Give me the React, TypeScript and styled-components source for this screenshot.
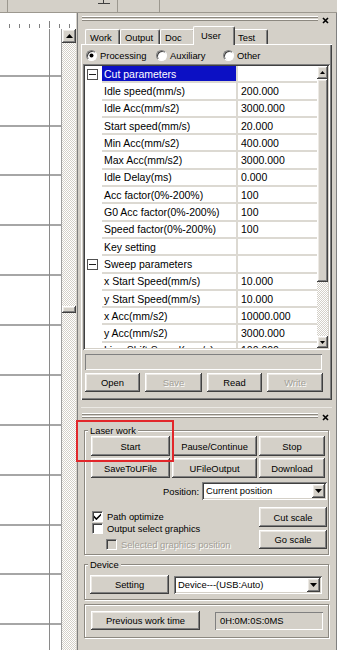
import * as React from "react";
import styled, { createGlobalStyle, css } from "styled-components";

const FACE = "#d4d0c8";
const LINE = "#dcd9d2";

const GlobalStyle = createGlobalStyle`
  * { box-sizing: border-box; }
  html, body { margin: 0; padding: 0; background: ${FACE}; }
  body {
    font-family: "Liberation Sans", Arial, sans-serif;
    font-size: 9.4px;
    color: #000;
  }
`;

const raised = css`
  background: ${FACE};
  box-shadow: inset -1px -1px #404040, inset 1px 1px #ffffff,
    inset -2px -2px #808080, inset 2px 2px #ece9e4;
`;

const sunken = css`
  box-shadow: inset 1px 1px #808080, inset -1px -1px #ffffff,
    inset 2px 2px #404040, inset -2px -2px ${FACE};
`;

const Frame = styled.div`
  position: relative;
  width: 337px;
  height: 650px;
  overflow: hidden;
  display: flex;
  flex-direction: column;
  background: ${FACE};
`;

const TopBar = styled.div`
  height: 13px;
  flex: none;
  display: flex;
  border-bottom: 1px solid #9c988f;
`;

const ToolCell = styled.div<{ $w: number }>`
  width: ${p => p.$w}px;
  display: flex;
  justify-content: flex-end;
  padding-right: 6px;
  border-right: 1px solid #9c988f;
`;

const Body = styled.div`
  flex: 1;
  display: flex;
  min-height: 0;
`;

const LeftPane = styled.div`
  width: 78px;
  flex: none;
  display: flex;
  flex-direction: column;
  border-right: 1px solid #808080;
`;

const RulerRow = styled.div`
  height: 16px;
  flex: none;
  display: flex;
`;

const RulerStrip = styled.div`
  width: 76px;
  background: #fff;
`;

const CanvasRow = styled.div`
  flex: 1;
  display: flex;
  min-height: 0;
`;

const Canvas = styled.div`
  width: 62px;
  flex: none;
  display: flex;
  overflow: hidden;
  background: #ffffff;
  border-right: 1px solid #9c9c9c;
`;

const CanvasCol = styled.div<{ $w: number }>`
  width: ${p => p.$w}px;
  flex: none;
  display: flex;
  flex-direction: column;
`;

const VGuide = styled.div`
  width: 1px;
  flex: none;
  background: #8a8a8a;
`;

const GuideCell = styled.div<{ $h: number }>`
  height: ${p => p.$h}px;
  flex: none;
  border-bottom: 2px solid #a6a6a6;
`;

const VScroll = styled.div<{ $w: number }>`
  width: ${p => p.$w}px;
  flex: none;
  display: flex;
  flex-direction: column;
`;

const ScrollBtn = styled.div<{ $h: number }>`
  height: ${p => p.$h}px;
  flex: none;
  display: flex;
  align-items: center;
  justify-content: center;
  ${raised};
`;

const ScrollTrack = styled.div`
  flex: 1;
  background: repeating-conic-gradient(${FACE} 0 25%, #ffffff 0 50%) 0 0 / 2px 2px;
`;

const ScrollThumb = styled.div<{ $top: number; $h: number }>`
  margin-top: ${p => p.$top}px;
  height: ${p => p.$h}px;
  ${raised};
`;

const RightPane = styled.div`
  flex: 1;
  display: flex;
  flex-direction: column;
  padding: 0 4px 0 3px;
  border-right: 1px solid #808080;
`;

const DockHeader = styled.div<{ $pad: number }>`
  height: 13px;
  flex: none;
  display: flex;
  align-items: flex-start;
  padding: ${p => p.$pad}px 0 0 1px;
`;

const Grip = styled.div`
  flex: 1;
  height: 5px;
  background: linear-gradient(
    to bottom,
    #ffffff 0 1px,
    #8c8880 1px 2px,
    transparent 2px 3px,
    #ffffff 3px 4px,
    #8c8880 4px 5px
  );
`;

const CloseBox = styled.div`
  width: 14px;
  display: flex;
  justify-content: center;
  padding-top: 1px;
`;

const TabStrip = styled.div`
  height: 18px;
  flex: none;
  display: flex;
  align-items: flex-end;
  padding-left: 4px;
`;

const Tab = styled.div<{ $w: number; $active?: boolean }>`
  position: relative;
  width: ${p => p.$w + (p.$active ? 4 : 0)}px;
  height: ${p => (p.$active ? 19 : 15)}px;
  margin: ${p => (p.$active ? "0 -2px -1px" : "0")};
  z-index: ${p => (p.$active ? 1 : 0)};
  padding: ${p => (p.$active ? "3px 0 0 7px" : "2px 0 0 4px")};
  background: ${FACE};
  border-top: 1px solid #ffffff;
  border-left: 1px solid #ffffff;
  border-right: 1px solid #404040;
  box-shadow: inset -1px 0 #808080;
  border-radius: 2px 2px 0 0;
  white-space: nowrap;
`;

const Sheet = styled.div`
  height: 356px;
  flex: none;
  display: flex;
  flex-direction: column;
  padding: 3px 2px 0 2px;
  box-shadow: inset 1px 1px #ffffff, inset -1px -1px #404040, inset -2px -2px #808080;
`;

const RadioRow = styled.div`
  height: 17px;
  display: flex;
  align-items: center;
  padding-left: 3px;
`;

const RadioItem = styled.label<{ $w: number }>`
  width: ${p => p.$w}px;
  display: flex;
  align-items: center;
  gap: 3px;
`;

const RadioDot = styled.span<{ $on?: boolean }>`
  width: 11px;
  height: 11px;
  border-radius: 50%;
  background: #fff;
  border: 1px solid;
  border-color: #808080 #ffffff #ffffff #808080;
  box-shadow: inset 1px 1px #404040;
  display: flex;
  align-items: center;
  justify-content: center;
  &::after {
    content: "";
    width: 3px;
    height: 3px;
    border-radius: 50%;
    background: ${p => (p.$on ? "#000" : "transparent")};
    box-shadow: ${p => (p.$on ? "0 0 0 0.5px #000" : "none")};
  }
`;

const PropGrid = styled.div`
  height: 286px;
  flex: none;
  display: flex;
  padding: 2px;
  background: #fff;
  ${sunken};
`;

const GridBody = styled.div`
  flex: 1;
  display: flex;
  flex-direction: column;
  overflow: hidden;
`;

const GridRow = styled.div`
  display: grid;
  grid-template-columns: 17px 136px 1fr;
  height: 17.3px;
  flex: none;
  font-size: 10.5px;
`;

const GutterCell = styled.div`
  display: flex;
  align-items: center;
  padding-left: 2px;
`;

const MinusBox = styled.span`
  width: 11px;
  height: 11px;
  border: 1px solid #505050;
  display: flex;
  align-items: center;
  justify-content: center;
  &::after {
    content: "";
    width: 7px;
    height: 1px;
    background: #202020;
  }
`;

const NameCell = styled.div<{ $sel?: boolean }>`
  border-bottom: 2px solid ${LINE};
  border-right: 2px solid ${LINE};
  padding-left: 2px;
  display: flex;
  align-items: center;
  white-space: nowrap;
  overflow: hidden;
  background: ${p => (p.$sel ? "#0c10c4" : "#fff")};
  color: ${p => (p.$sel ? "#fff" : "#000")};
`;

const ValueCell = styled.div`
  border-bottom: 2px solid ${LINE};
  padding-left: 3px;
  display: flex;
  align-items: center;
  white-space: nowrap;
  overflow: hidden;
`;

const StatusField = styled.div`
  height: 16px;
  flex: none;
  margin: 4px 8px 0 2px;
  background: ${FACE};
  box-shadow: inset 1px 1px #808080, inset -1px -1px #ffffff;
`;

const ButtonRow = styled.div`
  display: flex;
  gap: 5px;
  margin-top: 3px;
  padding-left: 2px;
`;

const Btn = styled.div<{ $w?: number; $h?: number; $off?: boolean }>`
  width: ${p => (p.$w ? `${p.$w}px` : "auto")};
  height: ${p => p.$h || 20}px;
  display: flex;
  align-items: center;
  justify-content: center;
  white-space: nowrap;
  color: ${p => (p.$off ? "#a39f97" : "#000")};
  text-shadow: ${p => (p.$off ? "1px 1px #ffffff" : "none")};
  ${raised};
`;

const LowerDock = styled.div`
  margin-top: 7px;
  border-top: 1px solid #ebe9e4;
  display: flex;
  flex-direction: column;
`;

const Group = styled.fieldset`
  margin: 4px 3px 0;
  padding: 0;
  min-width: 0;
  border: 1px solid #8c8880;
  box-shadow: inset 1px 1px #ffffff, 1px 1px #ffffff;
`;

const Legend = styled.legend`
  margin-left: 3px;
  padding: 0 2px;
  line-height: 11px;
  background: ${FACE};
`;

const GroupBody = styled.div<{ $pad: string }>`
  padding: ${p => p.$pad};
`;

const ButtonGrid = styled.div`
  display: grid;
  grid-template-columns: 79px 85px 66px;
  gap: 2px;
`;

const PositionRow = styled.div`
  display: flex;
  justify-content: flex-end;
  align-items: center;
  gap: 3px;
  margin-top: 4px;
`;

const Combo = styled.div<{ $w: number }>`
  width: ${p => p.$w}px;
  height: 18px;
  display: flex;
  padding: 2px;
  background: #fff;
  ${sunken};
`;

const ComboText = styled.div`
  flex: 1;
  padding-left: 2px;
  line-height: 14px;
  white-space: nowrap;
`;

const ComboBtn = styled.div`
  width: 13px;
  display: flex;
  align-items: center;
  justify-content: center;
  ${raised};
`;

const OptionArea = styled.div`
  display: flex;
  margin-top: 7px;
`;

const CheckList = styled.div`
  flex: 1;
  display: flex;
  flex-direction: column;
  padding: 3px 0 0 1px;
`;

const CheckRow = styled.label<{ $indent?: number; $top?: number; $off?: boolean }>`
  display: flex;
  align-items: center;
  gap: 4px;
  height: 12px;
  margin: ${p => p.$top || 0}px 0 0 ${p => p.$indent || 0}px;
  color: ${p => (p.$off ? "#a39f97" : "#000")};
  text-shadow: ${p => (p.$off ? "1px 1px #ffffff" : "none")};
  white-space: nowrap;
`;

const CheckBox = styled.span<{ $off?: boolean }>`
  width: 11px;
  height: 11px;
  flex: none;
  display: flex;
  align-items: center;
  justify-content: center;
  background: ${p => (p.$off ? FACE : "#fff")};
  border: 1px solid;
  border-color: #808080 #ffffff #ffffff #808080;
  box-shadow: inset 1px 1px #404040;
`;

const ScaleCol = styled.div`
  width: 68px;
  display: flex;
  flex-direction: column;
  gap: 3px;
`;

const InlineRow = styled.div<{ $gap: number }>`
  display: flex;
  align-items: center;
  gap: ${p => p.$gap}px;
`;

const TimeField = styled.div`
  width: 108px;
  height: 18px;
  padding-left: 5px;
  line-height: 18px;
  background: ${FACE};
  box-shadow: inset 1px 1px #808080, inset -1px -1px #ffffff;
`;

const Highlight = styled.div`
  position: absolute;
  left: 76px;
  top: 420px;
  width: 98px;
  height: 42px;
  border: 2px solid #e2262a;
  pointer-events: none;
`;

const Tri = ({ down, w = 7 }: { down?: boolean; w?: number }) => {
  const h = Math.ceil(w / 2);
  return (
    <svg width={w} height={h} viewBox={`0 0 ${w} ${h}`}>
      <path
        d={down ? `M0 0 L${w} 0 L${w / 2} ${h} Z` : `M0 ${h} L${w / 2} 0 L${w} ${h} Z`}
        fill="#000"
      />
    </svg>
  );
};

const CloseIcon = () => (
  <svg width="7" height="7" viewBox="0 0 7 7">
    <path d="M1 1 L6 6 M6 1 L1 6" stroke="#000" strokeWidth="1.6" />
  </svg>
);

const CheckMark = () => (
  <svg width="7" height="7" viewBox="0 0 7 7">
    <path d="M0 2.6 L2.4 5 L7 0.4 L7 2.6 L2.4 7.2 L0 4.8 Z" fill="#000" />
  </svg>
);

const RulerTicks = () => (
  <svg width="76" height="16">
    {[10, 20, 30, 40, 50, 60, 70].map(x => (
      <rect key={x} x={x - 1} y={x === 50 ? 8 : 11} width="1" height={x === 50 ? 7 : 4} fill="#808080" />
    ))}
  </svg>
);

const AlignIcon = () => (
  <svg width="14" height="5" viewBox="0 0 14 5">
    <rect x="6" y="0" width="1" height="3" fill="#404040" />
    <rect x="1" y="3" width="12" height="1" fill="#404040" />
  </svg>
);

// canvas guide cells: first one ends just under the ruler, then every ~50px
const guideHeights = [48, 50, 49, 50, 50, 50, 50, 50, 50, 50, 49, 50, 50];

const GuideColumn = ({ w }: { w: number }) => (
  <CanvasCol $w={w}>
    {guideHeights.map((h, i) => (
      <GuideCell key={i} $h={h} />
    ))}
  </CanvasCol>
);

interface Param {
  label: string;
  value?: string;
  group?: boolean;
  selected?: boolean;
}

const params: Param[] = [
  { label: "Cut parameters", group: true, selected: true },
  { label: "Idle speed(mm/s)", value: "200.000" },
  { label: "Idle Acc(mm/s2)", value: "3000.000" },
  { label: "Start speed(mm/s)", value: "20.000" },
  { label: "Min Acc(mm/s2)", value: "400.000" },
  { label: "Max Acc(mm/s2)", value: "3000.000" },
  { label: "Idle Delay(ms)", value: "0.000" },
  { label: "Acc factor(0%-200%)", value: "100" },
  { label: "G0 Acc factor(0%-200%)", value: "100" },
  { label: "Speed factor(0%-200%)", value: "100" },
  { label: "Key setting" },
  { label: "Sweep parameters", group: true },
  { label: "x Start Speed(mm/s)", value: "10.000" },
  { label: "y Start Speed(mm/s)", value: "10.000" },
  { label: "x Acc(mm/s2)", value: "10000.000" },
  { label: "y Acc(mm/s2)", value: "3000.000" },
  { label: "Line Shift Speed(mm/s)", value: "100.000" },
];

const tabs = [
  { name: "Work", w: 35 },
  { name: "Output", w: 40 },
  { name: "Doc", w: 35 },
  { name: "User", w: 38, active: true },
  { name: "Test", w: 35 },
];

const App: React.FC = () => (
  <Frame>
    <GlobalStyle />
    <TopBar>
      <ToolCell $w={8} />
      <ToolCell $w={110}>
        <AlignIcon />
      </ToolCell>
      <ToolCell $w={42} />
    </TopBar>

    <Body>
      <LeftPane>
        <RulerRow>
          <RulerStrip>
            <RulerTicks />
          </RulerStrip>
        </RulerRow>
        <CanvasRow>
          <Canvas>
            <GuideColumn w={49} />
            <VGuide />
            <GuideColumn w={11} />
          </Canvas>
          <VScroll $w={14}>
            <ScrollBtn $h={14}>
              <Tri />
            </ScrollBtn>
            <ScrollTrack>
              <ScrollThumb $top={263} $h={7} />
            </ScrollTrack>
          </VScroll>
        </CanvasRow>
      </LeftPane>

      <RightPane>
        <DockHeader $pad={3}>
          <Grip />
          <CloseBox>
            <CloseIcon />
          </CloseBox>
        </DockHeader>

        <TabStrip>
          {tabs.map(t => (
            <Tab key={t.name} $w={t.w} $active={t.active}>
              {t.name}
            </Tab>
          ))}
        </TabStrip>

        <Sheet>
          <RadioRow>
            <RadioItem $w={70}>
              <RadioDot $on />
              Processing
            </RadioItem>
            <RadioItem $w={67}>
              <RadioDot />
              Auxiliary
            </RadioItem>
            <RadioItem $w={60}>
              <RadioDot />
              Other
            </RadioItem>
          </RadioRow>

          <PropGrid>
            <GridBody>
              {params.map(p => (
                <GridRow key={p.label}>
                  <GutterCell>{p.group && <MinusBox />}</GutterCell>
                  <NameCell $sel={p.selected}>{p.label}</NameCell>
                  <ValueCell>{p.value}</ValueCell>
                </GridRow>
              ))}
            </GridBody>
            <VScroll $w={11}>
              <ScrollBtn $h={13}>
                <Tri w={5} />
              </ScrollBtn>
              <ScrollTrack>
                <ScrollThumb $top={0} $h={203} />
              </ScrollTrack>
              <ScrollBtn $h={12}>
                <Tri w={5} down />
              </ScrollBtn>
            </VScroll>
          </PropGrid>

          <StatusField />

          <ButtonRow>
            <Btn $w={55} $h={19}>Open</Btn>
            <Btn $w={57} $h={19} $off>Save</Btn>
            <Btn $w={55} $h={19}>Read</Btn>
            <Btn $w={56} $h={19} $off>Write</Btn>
          </ButtonRow>
        </Sheet>

        <LowerDock>
          <DockHeader $pad={5}>
            <Grip />
            <CloseBox>
              <CloseIcon />
            </CloseBox>
          </DockHeader>

          <Group>
            <Legend>Laser work</Legend>
            <GroupBody $pad="0 1px 4px 6px">
              <ButtonGrid>
                <Btn>Start</Btn>
                <Btn>Pause/Continue</Btn>
                <Btn>Stop</Btn>
                <Btn $h={20}>SaveToUFile</Btn>
                <Btn $h={20}>UFileOutput</Btn>
                <Btn $h={20}>Download</Btn>
              </ButtonGrid>

              <PositionRow>
                Position:
                <Combo $w={125}>
                  <ComboText>Current position</ComboText>
                  <ComboBtn>
                    <Tri w={7} down />
                  </ComboBtn>
                </Combo>
              </PositionRow>

              <OptionArea>
                <CheckList>
                  <CheckRow>
                    <CheckBox>
                      <CheckMark />
                    </CheckBox>
                    Path optimize
                  </CheckRow>
                  <CheckRow>
                    <CheckBox />
                    Output select graphics
                  </CheckRow>
                  <CheckRow $indent={14} $top={4} $off>
                    <CheckBox $off />
                    Selected graphics position
                  </CheckRow>
                </CheckList>
                <ScaleCol>
                  <Btn $h={20}>Cut scale</Btn>
                  <Btn $h={19}>Go scale</Btn>
                </ScaleCol>
              </OptionArea>
            </GroupBody>
          </Group>

          <Group>
            <Legend>Device</Legend>
            <GroupBody $pad="5px 6px 5px 5px">
              <InlineRow $gap={5}>
                <Btn $w={79} $h={19}>Setting</Btn>
                <Combo $w={148}>
                  <ComboText>Device---(USB:Auto)</ComboText>
                  <ComboBtn>
                    <Tri w={7} down />
                  </ComboBtn>
                </Combo>
              </InlineRow>
            </GroupBody>
          </Group>

          <Group>
            <GroupBody $pad="6px 5px 7px 6px">
              <InlineRow $gap={15}>
                <Btn $w={109} $h={19}>Previous work time</Btn>
                <TimeField>0H:0M:0S:0MS</TimeField>
              </InlineRow>
            </GroupBody>
          </Group>
        </LowerDock>
      </RightPane>
    </Body>

    <Highlight />
  </Frame>
);

export default App;
